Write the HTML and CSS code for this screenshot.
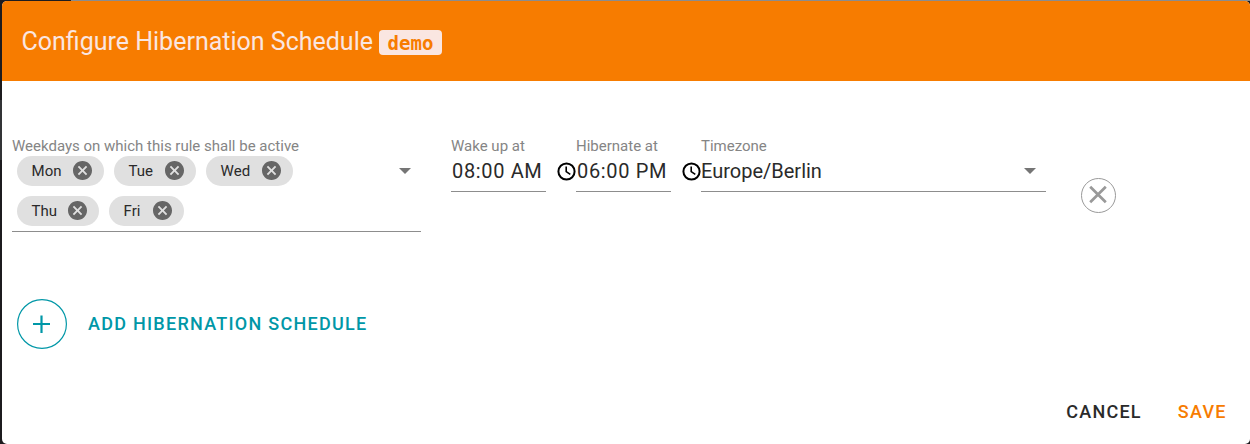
FILE: index.html
```html
<!DOCTYPE html>
<html lang="en">
<head>
<meta charset="utf-8">
<title>Configure Hibernation Schedule</title>
<link rel="stylesheet" href="styles.css">
</head>
<body>
<main class="dialog">
  <header class="dialog-header">
    <h1 class="title">Configure Hibernation Schedule</h1>
    <code class="tag">demo</code>
  </header>
  <section class="rule">
    <div class="field">
      <div class="label label-days">Weekdays on which this rule shall be active</div>
      <div class="control control-chips">
        <div class="chips">
          <span class="chip chip-mon">Mon<svg class="remove" viewBox="2 2 20 20"><path d="M12 2C6.47 2 2 6.47 2 12s4.47 10 10 10 10-4.47 10-10S17.53 2 12 2zm5 13.59L15.59 17 12 13.41 8.41 17 7 15.59 10.59 12 7 8.41 8.41 7 12 10.59 15.59 7 17 8.41 13.41 12 17 15.59z"/></svg></span>
          <span class="chip chip-tue">Tue<svg class="remove" viewBox="2 2 20 20"><path d="M12 2C6.47 2 2 6.47 2 12s4.47 10 10 10 10-4.47 10-10S17.53 2 12 2zm5 13.59L15.59 17 12 13.41 8.41 17 7 15.59 10.59 12 7 8.41 8.41 7 12 10.59 15.59 7 17 8.41 13.41 12 17 15.59z"/></svg></span>
          <span class="chip chip-wed">Wed<svg class="remove" viewBox="2 2 20 20"><path d="M12 2C6.47 2 2 6.47 2 12s4.47 10 10 10 10-4.47 10-10S17.53 2 12 2zm5 13.59L15.59 17 12 13.41 8.41 17 7 15.59 10.59 12 7 8.41 8.41 7 12 10.59 15.59 7 17 8.41 13.41 12 17 15.59z"/></svg></span>
          <span class="chip chip-thu">Thu<svg class="remove" viewBox="2 2 20 20"><path d="M12 2C6.47 2 2 6.47 2 12s4.47 10 10 10 10-4.47 10-10S17.53 2 12 2zm5 13.59L15.59 17 12 13.41 8.41 17 7 15.59 10.59 12 7 8.41 8.41 7 12 10.59 15.59 7 17 8.41 13.41 12 17 15.59z"/></svg></span>
          <span class="chip chip-fri">Fri<svg class="remove" viewBox="2 2 20 20"><path d="M12 2C6.47 2 2 6.47 2 12s4.47 10 10 10 10-4.47 10-10S17.53 2 12 2zm5 13.59L15.59 17 12 13.41 8.41 17 7 15.59 10.59 12 7 8.41 8.41 7 12 10.59 15.59 7 17 8.41 13.41 12 17 15.59z"/></svg></span>
        </div>
        <span class="arrow"></span>
      </div>
    </div>
    <div class="field">
      <div class="label">Wake up at</div>
      <div class="control"><span class="value time">08:00 AM</span>
        <svg class="clock" viewBox="0 0 19 19"><circle cx="9.5" cy="9.5" r="8.1"/><path d="M9.2 4.6v5l4.1 2.8"/></svg>
      </div>
    </div>
    <div class="field">
      <div class="label">Hibernate at</div>
      <div class="control"><span class="value time">06:00 PM</span>
        <svg class="clock" viewBox="0 0 19 19"><circle cx="9.5" cy="9.5" r="8.1"/><path d="M9.2 4.6v5l4.1 2.8"/></svg>
      </div>
    </div>
    <div class="field">
      <div class="label">Timezone</div>
      <div class="control"><span class="value zone">Europe/Berlin</span><span class="arrow"></span></div>
    </div>
    <button class="delete" aria-label="Remove rule"><svg viewBox="0 0 35 35"><circle cx="17.5" cy="17.5" r="17"/><path d="M9.2 8.7l15.6 15.6M24.8 8.7L9.2 24.3"/></svg></button>
  </section>
  <button class="add">
    <svg viewBox="0 0 50 50"><circle cx="25" cy="25" r="24.4"/><path d="M16 25h17M24.5 16.5v17.5"/></svg>
    <span class="add-text">ADD HIBERNATION SCHEDULE</span>
  </button>
  <footer class="actions">
    <button class="action cancel">CANCEL</button>
    <button class="action save">SAVE</button>
  </footer>
</main>
</body>
</html>
```
FILE: styles.css
```css
* { box-sizing: border-box; }
body {
  margin: 0;
  height: 444px;
  padding: 1px 0 0 2px;
  overflow: hidden;
  font-family: Roboto, sans-serif;
  color: #2a2a2a;
  background:
    linear-gradient(90deg, #1d1c20 71px, #8b8c8e 71px) 0 0 / 100% 1px no-repeat,
    linear-gradient(#333436, #333436) 0 100px / 2px 60px no-repeat,
    #1c1b1e;
}
button { border: 0; padding: 0; margin: 0; background: none; font-family: inherit; }
svg { display: block; flex: none; fill: none; }
.dialog {
  height: 443px;
  display: flex;
  flex-direction: column;
  background: #fff;
  border-radius: 5px;
  overflow: hidden;
}
.dialog-header {
  height: 80px;
  flex: none;
  display: flex;
  align-items: center;
  padding-left: 19.5px;
  background: #f77c00;
  color: #fae6e1;
}
.title { margin: 2px 0 0; font-size: 25px; font-weight: 400; line-height: 30px; white-space: nowrap; width: 351px; }
.tag {
  margin: 3px 0 0 6.5px;
  width: 63px;
  height: 25px;
  border-radius: 4px;
  background: #fae6e1;
  color: #f77c00;
  font: bold 19px/27px "DejaVu Sans Mono", monospace;
  text-align: center;
}
.rule {
  display: grid;
  grid-template-columns: 409px 95px 95px 345px 35px;
  column-gap: 30px;
  align-items: start;
  padding: 56px 0 0 10px;
}
.label { height: 18px; font-size: 15px; line-height: 18px; color: #858585; white-space: nowrap; }
.control {
  display: flex;
  align-items: center;
  height: 37px;
  padding-bottom: 5px;
  border-bottom: 1px solid #8d8d8d;
}
.value { font-size: 20px; line-height: 24px; white-space: nowrap; flex: none; }
.time { width: 106px; padding-left: 1px; letter-spacing: .65px; }
.clock { width: 19px; height: 19px; stroke: #000; stroke-width: 2; margin-top: 1px; }
.clock path { stroke-width: 1.6; }
.arrow {
  margin-left: auto;
  margin-right: 10px;
  flex: none;
  border: 6px solid transparent;
  border-top-color: #757575;
  border-bottom: 0;
}
.control-chips { height: 77px; align-items: flex-start; padding: 0; }
.control-chips .arrow { margin-top: 13px; }
.chips { display: flex; flex-wrap: wrap; gap: 10px; width: 300px; padding: 1px 0 0 5px; }
.chip {
  display: flex;
  align-items: center;
  justify-content: space-between;
  height: 30px;
  padding: 0 11.6px 0 14.6px;
  border-radius: 15px;
  background: #e0e0e0;
  font-size: 15px;
}
.chip-mon, .chip-wed { width: 87px; }
.chip-tue, .chip-thu { width: 82px; }
.chip-fri { width: 75px; }
.remove { width: 19px; height: 19px; fill: #666; margin-bottom: 1px; }
.delete { width: 35px; height: 35px; margin: 41px 0 0 5px; }
.delete svg { width: 35px; height: 35px; stroke: #999; }
.delete path { stroke-width: 2.7; }
.add {
  display: flex;
  align-items: center;
  gap: 21px;
  margin: 67px 0 0 15px;
  color: #0097a7;
  align-self: flex-start;
}
.add svg { width: 50px; height: 50px; stroke: #0097a7; stroke-width: 1.2; }
.add path { stroke-width: 2.2; }
.add-text { font-size: 18px; font-weight: 500; letter-spacing: 1.26px; margin-bottom: 2px; }
.actions { display: flex; justify-content: flex-end; gap: 36px; padding-right: 23.3px; margin-top: 52px; }
.action { font-size: 18px; line-height: 22px; font-weight: 500; letter-spacing: 1.25px; }
.cancel { color: #2a2a2a; }
.save { color: #f77c00; }
```
